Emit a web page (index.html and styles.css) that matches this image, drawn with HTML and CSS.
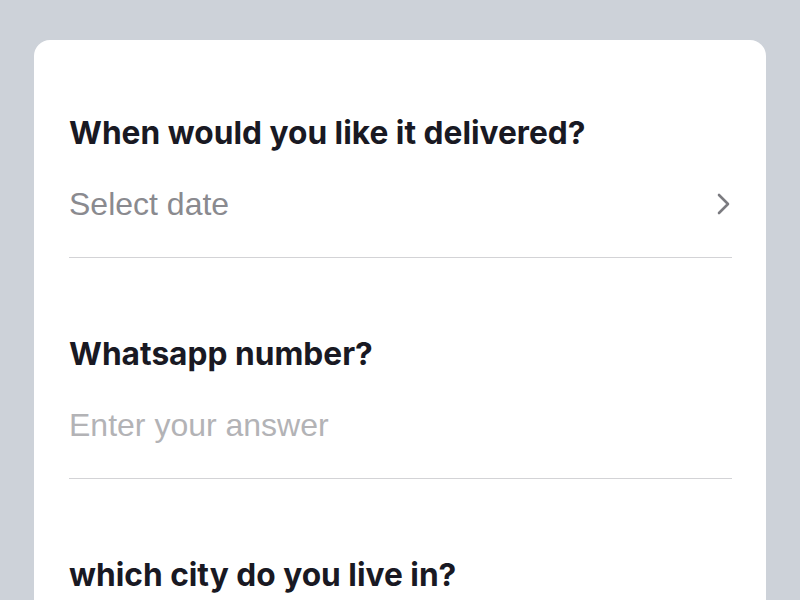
FILE: index.html
```html
<!DOCTYPE html>
<html lang="en">
<head>
    <meta charset="UTF-8">
    <meta name="viewport" content="width=device-width, initial-scale=1.0">
    <title>Order Form</title>
    <link rel="stylesheet" href="styles.css">
</head>
<body>
    <div class="card">
        <div class="field">
            <h2 class="question">When would you like it delivered?</h2>
            <div class="answer select-row">
                <span class="select-text">Select date</span>
                <svg class="chevron" width="16" height="22" viewBox="0 0 16 22">
                    <path d="M3 2 L12 11 L3 20" fill="none" stroke="#7b7b80" stroke-width="2.6" stroke-linecap="round" stroke-linejoin="round"/>
                </svg>
            </div>
        </div>

        <div class="field">
            <h2 class="question">Whatsapp number?</h2>
            <input class="answer text-input" type="text" placeholder="Enter your answer">
        </div>

        <div class="field">
            <h2 class="question">which city do you live in?</h2>
            <input class="answer text-input" type="text" placeholder="Enter your answer">
        </div>
    </div>
</body>
</html>
```

FILE: styles.css
```css
* {
    box-sizing: border-box;
}

html, body {
    overflow: hidden;
}

body {
    background: #cdd2d9;
    margin: 0;
    padding: 40px 34px 0;
    height: 100vh;
}

.card {
    background: #ffffff;
    border-radius: 16px;
    padding: 0 34px 0 35px;
    min-height: 700px;
}

.field {
    padding-top: 74px;
    border-bottom: 1px solid #d3d3d6;
}

.field + .field {
    padding-top: 77px;
}

.question {
    margin: 0;
    font-family: Inter, "Noto Sans", sans-serif;
    font-weight: 700;
    font-size: 31.7px;
    line-height: 38px;
    color: #191923;
}

.answer {
    margin-top: 34px;
    margin-bottom: 35px;
    height: 36px;
    font-family: "Liberation Sans", Arial, sans-serif;
    font-size: 32px;
    line-height: 36px;
}

.select-row {
    display: flex;
    align-items: center;
    justify-content: space-between;
    cursor: pointer;
}

.select-text {
    color: #8a8a8f;
}

.text-input {
    display: block;
    width: 100%;
    border: none;
    padding: 0;
    outline: none;
    color: #191923;
    background: transparent;
}

.text-input::placeholder {
    color: #b3b3b6;
}
```
